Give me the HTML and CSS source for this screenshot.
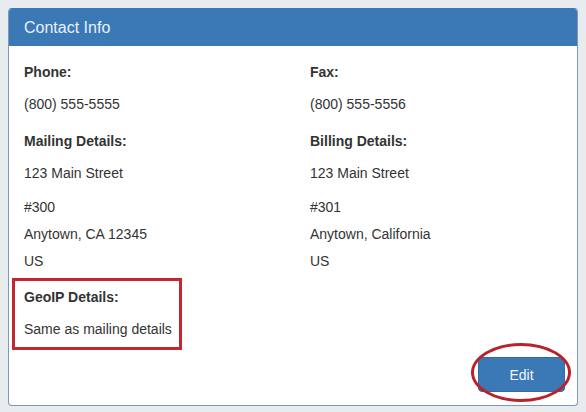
FILE: index.html
```html
<!DOCTYPE html>
<html>
<head>
<meta charset="utf-8">
<link rel="stylesheet" href="styles.css">
</head>
<body>
<div class="panel">
  <div class="panel-heading">Contact Info</div>
  <div class="panel-body">
    <div class="grid">
      <div class="field">
        <div class="label">Phone:</div>
        <div class="value">(800) 555-5555</div>
      </div>
      <div class="field">
        <div class="label">Fax:</div>
        <div class="value">(800) 555-5556</div>
      </div>
      <div class="field">
        <div class="label">Mailing Details:</div>
        <div class="value street">123 Main Street</div>
        <div class="value line">#300</div>
        <div class="value line">Anytown, CA 12345</div>
        <div class="value line">US</div>
      </div>
      <div class="field">
        <div class="label">Billing Details:</div>
        <div class="value street">123 Main Street</div>
        <div class="value line">#301</div>
        <div class="value line">Anytown, California</div>
        <div class="value line">US</div>
      </div>
      <div class="field highlight">
        <div class="label">GeoIP Details:</div>
        <div class="value">Same as mailing details</div>
      </div>
    </div>
    <div class="actions">
      <span class="btn-wrap">
        <button class="btn">Edit</button>
        <span class="ring"></span>
      </span>
    </div>
  </div>
</div>
</body>
</html>
```
FILE: styles.css
```css
html, body {
  margin: 0;
  padding: 0;
}
body {
  background: #e9ecef;
  padding: 8px;
  font-family: "Liberation Sans", Arial, sans-serif;
  font-size: 14px;
  line-height: 20px;
  color: #333;
}
.panel {
  width: 570px;
  box-sizing: border-box;
  background: #fff;
  border: 1px solid #7d98b8;
  border-top-color: #3b78b6;
  border-radius: 4px;
  overflow: hidden;
}
.panel-heading {
  height: 37px;
  display: flex;
  align-items: center;
  background: #3b78b6;
  color: #e8f1fb;
  font-size: 16px;
  margin: 0 -1px;
  padding: 0 15px 0 16px;
}
.panel-body {
  padding: 16px 12px 13px 15px;
}
.grid {
  display: grid;
  grid-template-columns: 286px 1fr;
  row-gap: 17px;
}
.field {
  position: relative;
}
.label {
  font-weight: bold;
  margin-bottom: 12px;
}
.street {
  margin-bottom: 14px;
}
.line + .line {
  margin-top: 7px;
}
.highlight {
  margin-top: -1px;
}
.highlight::after {
  content: "";
  position: absolute;
  left: -12px;
  top: -9px;
  width: 170px;
  height: 72px;
  box-sizing: border-box;
  border: 3px solid #c1272d;
}
.actions {
  display: flex;
  justify-content: flex-end;
  margin-top: 18px;
}
.btn-wrap {
  position: relative;
  display: inline-block;
}
.btn {
  display: block;
  width: 87px;
  height: 35px;
  background: #3b78b6;
  border: 1px solid #2f6aa3;
  border-radius: 4px;
  color: #f2f6fb;
  font-family: "Liberation Sans", Arial, sans-serif;
  font-size: 14px;
  padding: 0;
}
.ring {
  position: absolute;
  left: -7px;
  top: -14px;
  width: 100px;
  height: 59px;
  box-sizing: border-box;
  border: 3px solid #b9222b;
  border-radius: 50%;
}
```
